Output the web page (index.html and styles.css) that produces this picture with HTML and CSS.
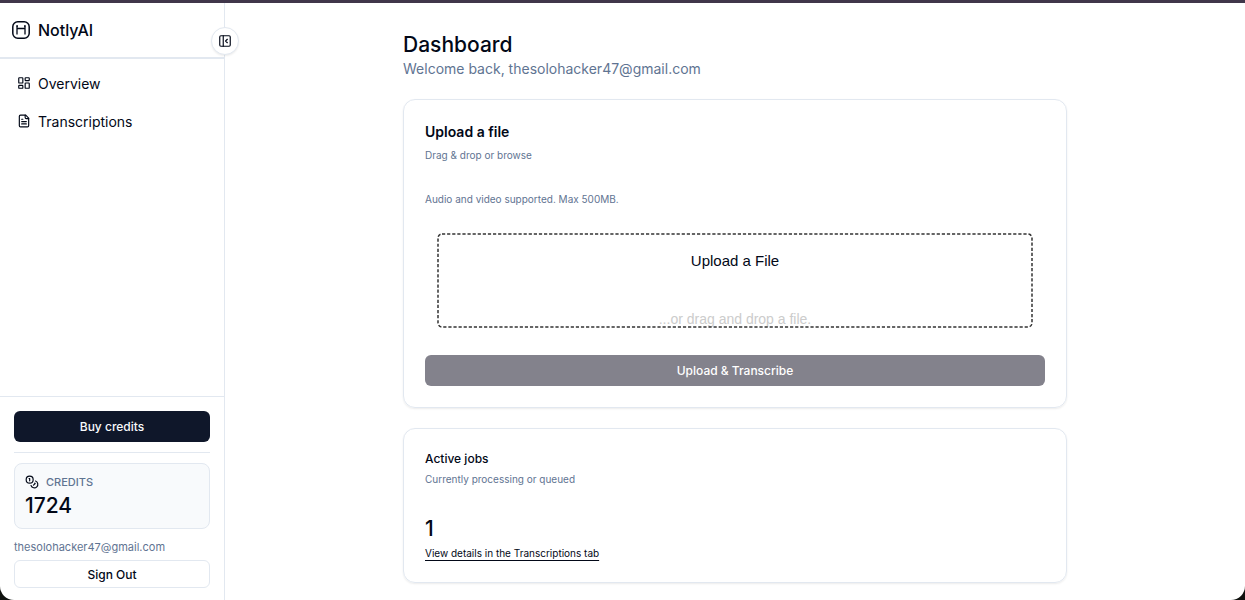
FILE: index.html
```
<!DOCTYPE html>
<html lang="en">
<head>
  <meta charset="UTF-8" />
  <meta name="viewport" content="width=device-width, initial-scale=1" />
  <title>NotlyAI - Dashboard</title>
  <link rel="stylesheet" href="styles.css">
</head>
<body>
  <div class="window">
    <aside class="sidebar">
      <header class="brand">
        <svg class="brand-logo" viewBox="0 0 18 18" fill="none" stroke="currentColor">
          <rect x="0.8" y="0.8" width="16.4" height="16.4" rx="5" stroke-width="1.5" />
          <path d="M5 13.5V5M13 13.5V5M4.2 5H6M12 5h1.8M5.3 7.5h7.4" stroke-width="1.3" />
        </svg>
        <span>NotlyAI</span>
      </header>
      <button class="collapse-btn" type="button" aria-label="Collapse sidebar">
        <svg class="icon" viewBox="0 0 24 24">
          <rect x="3" y="3" width="18" height="18" rx="2" />
          <path d="M9 3v18M16 9l-3 3 3 3" />
        </svg>
      </button>

      <nav class="nav">
        <a href="#overview" class="nav-link">
          <svg class="icon" viewBox="0 0 24 24">
            <rect x="3" y="3" width="7" height="9" rx="1" />
            <rect x="14" y="3" width="7" height="5" rx="1" />
            <rect x="14" y="12" width="7" height="9" rx="1" />
            <rect x="3" y="16" width="7" height="5" rx="1" />
          </svg>
          Overview
        </a>
        <a href="#transcriptions" class="nav-link">
          <svg class="icon" viewBox="0 0 24 24">
            <path d="M15 2H6a2 2 0 0 0-2 2v16a2 2 0 0 0 2 2h12a2 2 0 0 0 2-2V7Z" />
            <path d="M14 2v4a2 2 0 0 0 2 2h4M10 9H8M16 13H8M16 17H8" />
          </svg>
          Transcriptions
        </a>
      </nav>

      <div class="account">
        <button class="btn btn-dark" type="button">Buy credits</button>
        <hr class="divider">
        <div class="credits">
          <div class="credits-label">
            <svg class="icon" viewBox="0 0 24 24">
              <circle cx="8" cy="8" r="6" />
              <path d="M18.09 10.37A6 6 0 1 1 10.34 18M7 6h1v4M16.71 13.88l.7.71-2.82 2.82" />
            </svg>
            CREDITS
          </div>
          <div class="credits-value">1724</div>
        </div>
        <div class="email">thesolohacker47@gmail.com</div>
        <button class="btn btn-outline" type="button">Sign Out</button>
      </div>
    </aside>

    <main class="main">
      <div class="content">
        <div class="page-head">
          <h1>Dashboard</h1>
          <p>Welcome back, thesolohacker47@gmail.com</p>
        </div>

        <section class="card">
          <h2 class="upload-title">Upload a file</h2>
          <p class="muted">Drag &amp; drop or browse</p>
          <p class="muted note">Audio and video supported. Max 500MB.</p>
          <div class="dropzone">
            <svg class="dropzone-border" aria-hidden="true">
              <rect x="1" y="1" rx="4" />
            </svg>
            <button class="browse-btn" type="button">Upload a File</button>
            <span class="drop-hint">...or drag and drop a file.</span>
          </div>
          <button class="btn btn-upload" type="button">Upload &amp; Transcribe</button>
        </section>

        <section class="card">
          <h2 class="jobs-title">Active jobs</h2>
          <p class="muted">Currently processing or queued</p>
          <div class="job-count">1</div>
          <a href="#transcriptions" class="details-link">View details in the Transcriptions tab</a>
        </section>
      </div>
    </main>
  </div>
</body>
</html>
```
FILE: styles.css
```
* {
  box-sizing: border-box;
}
body {
  margin: 0;
  background: #10120f;
  color: #020817;
  font-family: Inter, "Liberation Sans", sans-serif;
}
h1, h2, p {
  margin: 0;
}
button {
  font-family: inherit;
  color: inherit;
  cursor: pointer;
}
.window {
  display: flex;
  min-height: 100vh;
  background: #fff;
  border-top: 3px solid #40364a;
  border-radius: 0 0 14px 14px;
}
.icon {
  width: 14px;
  height: 14px;
  flex: none;
  fill: none;
  stroke: currentColor;
  stroke-width: 2;
  stroke-linecap: round;
  stroke-linejoin: round;
}

/* Sidebar */
.sidebar {
  position: relative;
  display: flex;
  flex-direction: column;
  width: 225px;
  flex: none;
  border-right: 1px solid #e2e8f0;
}
.brand {
  display: flex;
  align-items: center;
  gap: 8px;
  height: 56px;
  padding: 0 12px;
  border-bottom: 2px solid #e2e8f0;
  font-size: 16px;
  font-weight: 500;
}
.brand-logo {
  width: 18px;
  height: 18px;
}
.collapse-btn {
  position: absolute;
  top: 24px;
  right: -15px;
  display: flex;
  align-items: center;
  justify-content: center;
  width: 28px;
  height: 28px;
  padding: 0;
  background: #fff;
  border: 1px solid #e2e8f0;
  border-radius: 50%;
  box-shadow: 0 1px 2px rgba(0,0,0,0.08);
}
.nav {
  display: flex;
  flex-direction: column;
  gap: 6px;
  padding: 8px 12px;
}
.nav-link {
  display: flex;
  align-items: center;
  gap: 7px;
  height: 32px;
  padding: 0 5px;
  color: inherit;
  font-size: 14px;
  text-decoration: none;
}
.account {
  display: flex;
  flex-direction: column;
  margin-top: auto;
  padding: 14px 14px 12px;
  border-top: 1px solid #e2e8f0;
}
.btn {
  width: 100%;
  height: 31px;
  padding: 0;
  border: none;
  border-radius: 6px;
  font-size: 12px;
  font-weight: 500;
}
.btn-dark {
  background: #0f172a;
  color: #f8fafc;
}
.btn-outline {
  height: 28px;
  background: #fff;
  border: 1px solid #e2e8f0;
}
.divider {
  width: 100%;
  margin: 10px 0;
  border: none;
  border-top: 1px solid #e2e8f0;
}
.credits {
  padding: 10px 10px 6px;
  background: #f8fafc;
  border: 1px solid #e2e8f0;
  border-radius: 8px;
}
.credits-label {
  display: flex;
  align-items: center;
  gap: 7px;
  color: #5f7492;
  font-size: 11px;
  line-height: 16px;
  font-weight: 500;
}
.credits-label .icon {
  color: #020817;
}
.credits-value {
  font-size: 21px;
  line-height: 32px;
  font-weight: 500;
}
.email {
  margin: 10px 0 5px;
  color: #5f7492;
  font-size: 11px;
  line-height: 16px;
}

/* Main column */
.main {
  flex: 1;
  min-width: 0;
  padding: 28px 20px 16px;
}
.content {
  max-width: 664px;
  margin: 0 auto;
}
.page-head h1 {
  font-size: 21px;
  line-height: 28px;
  font-weight: 500;
}
.page-head p {
  color: #5f7492;
  font-size: 14px;
  line-height: 20px;
}
.card {
  margin-top: 20px;
  padding: 21px;
  border: 1px solid #e2e8f0;
  border-radius: 12px;
  box-shadow: 0 1px 2px rgba(0,0,0,0.08);
}
.upload-title {
  font-size: 14px;
  line-height: 22px;
  font-weight: 600;
}
.jobs-title {
  font-size: 12px;
  line-height: 17px;
  font-weight: 500;
}
.muted {
  margin-top: 4px;
  color: #5f7492;
  font-size: 10px;
  line-height: 16px;
}
.note {
  margin-top: 28px;
}
.dropzone {
  position: relative;
  display: flex;
  flex-direction: column;
  align-items: center;
  height: 95px;
  margin: 26px 12px 27px;
  padding-top: 18px;
  font-family: "Liberation Sans", Arial, sans-serif;
}
.dropzone-border {
  position: absolute;
  inset: 0;
  width: 100%;
  height: 100%;
  pointer-events: none;
}
.dropzone-border rect {
  width: calc(100% - 2px);
  height: calc(100% - 2px);
  fill: none;
  stroke: #333;
  stroke-width: 1.5;
  stroke-dasharray: 3.2 1.9;
}
.browse-btn {
  padding: 0;
  background: none;
  border: none;
  font-size: 15px;
  line-height: 20px;
}
.drop-hint {
  margin-top: 38px;
  color: #ccc;
  font-size: 14px;
  line-height: 20px;
}
.btn-upload {
  display: block;
  background: #83828c;
  color: #fff;
}
.job-count {
  margin-top: 28px;
  font-size: 21px;
  line-height: 28px;
  font-weight: 500;
}
.details-link {
  display: block;
  width: fit-content;
  margin-top: 2px;
  color: inherit;
  font-size: 10px;
  line-height: 16px;
  text-underline-offset: 3px;
}
```
